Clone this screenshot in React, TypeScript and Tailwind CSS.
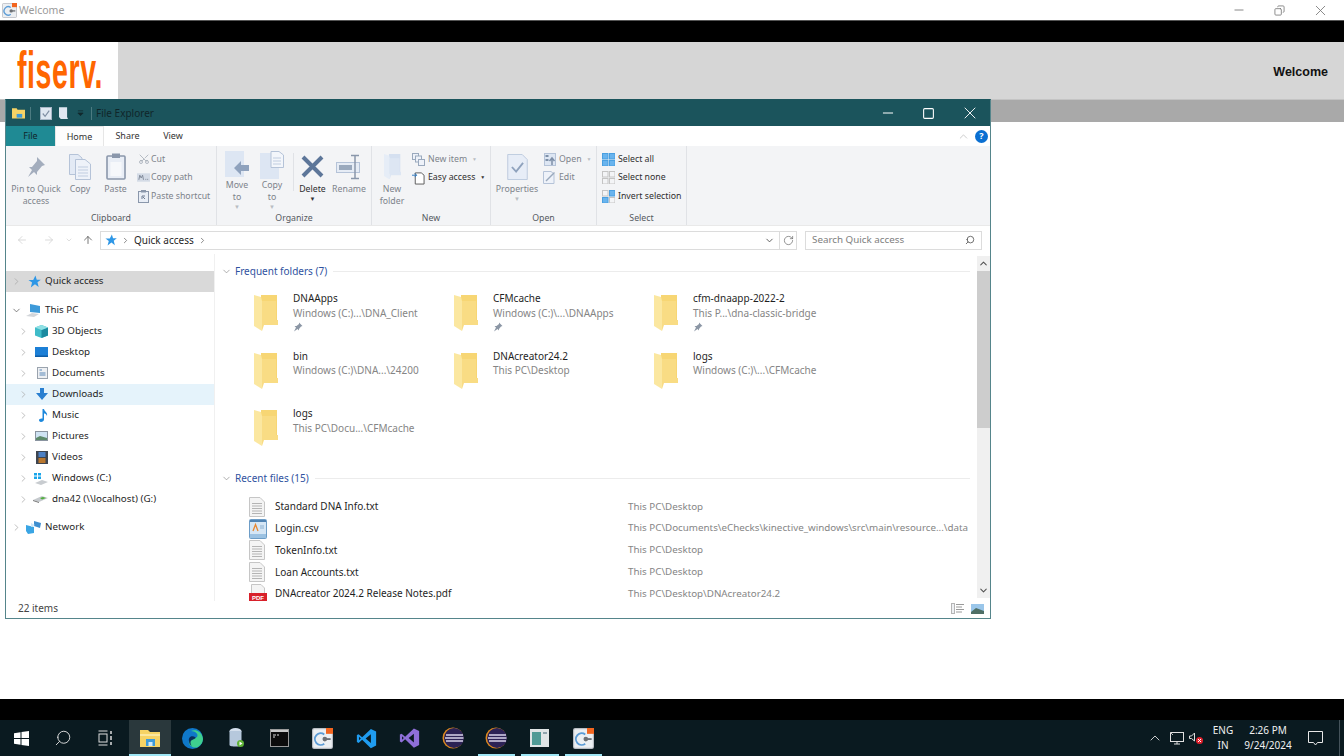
import React from 'react';
import { ChevronDown, ChevronRight, ChevronUp, Scissors, RotateCw, Search, ArrowLeft, ArrowRight, ArrowUp, Minus, Square, X, Copy } from 'lucide-react';

type IconProps = { size?: number };

// ---------- shared drawings ----------
const FolderIcon = ({ size = 24, pale = false }: IconProps & { pale?: boolean }) => (
  <svg width={size} height={size * 1.5} viewBox="0 0 24 36">
    <path d="M1 0 H23 V28 H7 V0 Z" fill={pale ? '#d5e0f0' : '#f7d674'} />
    <path d="M0 0 L7 2 L8 6 V36 L0 31 Z" fill={pale ? '#e6edf7' : '#fbe7a0'} />
    <path d="M8 6 V36 L10 30 H24 V25 H22 V6 Z" fill={pale ? '#dde6f3' : '#f9dc84'} />
  </svg>
);

const AppIcon = ({ size = 18 }: IconProps) => (
  <svg width={size} height={size} viewBox="0 0 18 18">
    <rect x="0.5" y="0.5" width="17" height="17" rx="1.5" fill="#eceff2" stroke="#b8bcc2" />
    <rect x="12" y="0" width="6" height="5" fill="#f2651f" />
    <path d="M10.5 5.5 A5 5 0 1 0 10.5 13.5" fill="none" stroke="#5b9bd5" strokeWidth="1.6" />
    <circle cx="11" cy="9.5" r="2" fill="#6c7075" />
    <path d="M12 9.5 H16" stroke="#6c7075" strokeWidth="1.6" />
  </svg>
);

const StarIcon = ({ size = 14 }: IconProps) => (
  <svg width={size} height={size} viewBox="0 0 14 14">
    <path d="M8 0.5 L9.4 5 H13.8 L10.2 7.8 L11.5 13 L7.5 10 L3 13.5 L4.4 8.2 L0.5 5.3 H5.6 Z" fill="#2e97e6" />
  </svg>
);

const TextFile = () => (
  <svg width="16" height="20" viewBox="0 0 16 20">
    <path d="M0.5 0.5 H11 L15.5 5 V19.5 H0.5 Z" fill="#f4f4f4" stroke="#c6c6c6" />
    <path d="M3 6.5 H13 M3 9 H13 M3 11.5 H13 M3 14 H13 M3 16.5 H13" stroke="#b4b4b4" />
  </svg>
);

const CsvFile = () => (
  <svg width="18" height="20" viewBox="0 0 18 20">
    <rect x="0.5" y="0.5" width="17" height="19" rx="1" fill="#d5e6f5" stroke="#6d9dc7" />
    <rect x="1" y="1" width="16" height="2" fill="#4f83b3" />
    <rect x="1" y="15" width="16" height="4" fill="#9cc2e2" />
    <path d="M4 12 L6.5 5.5 L9 12" fill="none" stroke="#e8862e" strokeWidth="1.3" />
    <path d="M11 7 H15 M11 9 H15" stroke="#8bb0d0" />
  </svg>
);

const PdfFile = () => (
  <svg width="18" height="20" viewBox="0 0 18 20">
    <path d="M2.5 0.5 H12 L15.5 4 V19.5 H2.5 Z" fill="#f4f4f4" stroke="#c6c6c6" />
    <rect x="0" y="9" width="18" height="9" fill="#d8202a" />
    <text x="9" y="15.5" textAnchor="middle" fontSize="6" fontWeight="700" fill="#fff" fontFamily="Liberation Sans, sans-serif">PDF</text>
  </svg>
);

// ---------- ribbon ----------
const BigButton = ({ w, icon, label, dark, caret }: { w: number; icon: React.ReactNode; label: React.ReactNode; dark?: boolean; caret?: string }) => (
  <div className="flex flex-col items-center text-center leading-[12px] whitespace-nowrap" style={{ width: w }}>
    <div className="h-[33px] flex items-center justify-center">{icon}</div>
    <div className={dark ? 'text-[#2f2f2f]' : 'text-[#7d838b]'}>{label}</div>
    {caret && <div className={`text-[6px] leading-[8px] ${caret}`}>▼</div>}
  </div>
);

const SmallRow = ({ icon, label, dark, caret, tight }: { icon: React.ReactNode; label: string; dark?: boolean; caret?: string; tight?: boolean }) => (
  <div className={`h-[18.5px] flex items-center whitespace-nowrap ${tight ? 'gap-px' : 'gap-[3px]'} ${dark ? 'text-[#2f2f2f]' : 'text-[#7d838b]'}`}>
    <div className="w-[13px] h-[13px] flex items-center justify-center shrink-0">{icon}</div>
    <span>{label}</span>
    {caret && <span className={`text-[5px] ml-[2px] ${caret}`}>▼</span>}
  </div>
);

const Group = ({ w, label, children }: { w: number; label: string; children: React.ReactNode }) => (
  <div className="h-full flex flex-col border-r border-[#e0e2e6] shrink-0" style={{ width: w }}>
    <div className="flex-1 min-h-0 pt-[4px] flex">{children}</div>
    <div className="text-center leading-[14px] text-[#55595f]">{label}</div>
  </div>
);

const Grid4 = ({ fills }: { fills: string[] }) => (
  <svg width="13" height="13" viewBox="0 0 13 13">
    {[[0, 0], [7, 0], [0, 7], [7, 7]].map(([x, y], i) => (
      <rect key={i} x={x + 0.5} y={y + 0.5} width="5.5" height="5.5" fill={fills[i] === 'none' ? 'none' : fills[i]} stroke={fills[i] === 'none' ? '#c4c4c4' : '#4a9fe0'} />
    ))}
  </svg>
);

const Ribbon = () => (
  <div className="h-[80px] shrink-0 bg-[#f3f4f6] flex text-[8.75px] border-b border-[#e9e9e9]">
    <Group w={211} label="Clipboard">
      <div className="w-[5px]" />
      <BigButton w={50} label={<>Pin to Quick<br />access</>} icon={
        <svg width="22" height="24" viewBox="0 0 22 24"><path d="M12 2 L20 10 L17 11 L12 17 L12 20 L9 17 L3 22 L7 15 L4 12 L7 12 L12 6 Z" fill="#a3adbd" /></svg>
      } />
      <BigButton w={38} label="Copy" icon={
        <svg width="22" height="26" viewBox="0 0 22 26"><path d="M0.5 0.5 H9 L13 4 V20.5 H0.5 Z" fill="#e3eaf5" stroke="#b5c3d8" /><path d="M6.5 5.5 H16 L21.5 10 V25.5 H6.5 Z" fill="#eef2f9" stroke="#b5c3d8" /><path d="M9 13 H19 M9 16 H19 M9 19 H19 M9 22 H19" stroke="#c0cde0" /></svg>
      } />
      <BigButton w={33} label="Paste" icon={
        <svg width="20" height="27" viewBox="0 0 20 27"><rect x="1" y="3" width="18" height="23" rx="1" fill="#e9eef6" stroke="#8a97ab" strokeWidth="1.6" /><rect x="6" y="0.5" width="8" height="4.5" fill="#8a97ab" /><path d="M4.5 9 H15.5 V23 H4.5 Z" fill="#f6f8fb" /></svg>
      } />
      <div className="ml-[5px]">
        <SmallRow tight label="Cut" icon={<Scissors size={12} color="#9aa2ae" strokeWidth={1.4} className="-rotate-90" />} />
        <SmallRow tight label="Copy path" icon={
          <svg width="14" height="9" viewBox="0 0 14 9"><rect width="14" height="9" fill="#d4dbe6" /><path d="M2 7 L3 2 L4.5 5 L6 2 L7 7 M9 6.5 H10 M11 6.5 H12" stroke="#7d8796" fill="none" /></svg>
        } />
        <SmallRow tight label="Paste shortcut" icon={
          <svg width="11" height="13" viewBox="0 0 11 13"><rect x="0.5" y="1.5" width="10" height="11" fill="#e9eef6" stroke="#8a97ab" /><rect x="3" y="0" width="5" height="2.5" fill="#8a97ab" /><path d="M4 9 V6 H7 M5 7 L7 9" stroke="#6f7d92" fill="none" /></svg>
        } />
      </div>
    </Group>
    <Group w={155} label="Organize">
      <div className="w-[2.5px]" />
      <BigButton w={35} label={<>Move<br />to</>} caret="text-[#b8bcc2]" icon={
        <svg width="24" height="28" viewBox="0 0 24 28"><rect width="19" height="26" fill="#dde6f3" /><path d="M9 17 L16 10 V14 H24 V20 H16 V24 Z" fill="#8fa2bd" /></svg>
      } />
      <BigButton w={35} label={<>Copy<br />to</>} caret="text-[#b8bcc2]" icon={
        <svg width="24" height="28" viewBox="0 0 24 28"><rect y="2" width="19" height="26" fill="#dde6f3" /><path d="M11 0.5 H19 L23.5 4 V16.5 H11 Z" fill="#f3f6fb" stroke="#b5c3d8" /><path d="M13 7 H21 M13 10 H21 M13 13 H21" stroke="#c0cde0" /></svg>
      } />
      <div className="w-[3px]" />
      <div className="w-px h-[38px] bg-[#e0e2e6] mt-[3px]" />
      <BigButton w={38} dark label="Delete" caret="text-[#333]" icon={
        <svg width="23" height="23" viewBox="0 0 23 23"><path d="M2 2 L21 21 M21 2 L2 21" stroke="#5d7699" strokeWidth="4" /></svg>
      } />
      <BigButton w={35} label="Rename" icon={
        <svg width="26" height="26" viewBox="0 0 26 26"><rect x="0.5" y="8.5" width="23" height="10" fill="#e6ecf5" stroke="#b5c3d8" /><rect x="3" y="11" width="13" height="5" fill="#9aa9bd" /><path d="M15 1.5 H23 M19 1.5 V24.5 M15 24.5 H23" stroke="#8a97ab" strokeWidth="1.5" fill="none" /></svg>
      } />
    </Group>
    <Group w={119} label="New">
      <BigButton w={40} label={<>New<br />folder</>} icon={<FolderIcon size={17} pale />} />
      <div>
        <SmallRow label="New item" caret="text-[#b8bcc2]" icon={
          <svg width="13" height="13" viewBox="0 0 13 13"><rect x="0.5" y="0.5" width="6" height="6" fill="#eef2f9" stroke="#9aa9bd" /><rect x="3.5" y="3" width="6" height="6" fill="#eef2f9" stroke="#9aa9bd" /><rect x="6.5" y="6.5" width="6" height="6" fill="#eef2f9" stroke="#9aa9bd" /></svg>
        } />
        <SmallRow dark label="Easy access" caret="text-[#333]" icon={
          <svg width="14" height="14" viewBox="0 0 14 14"><path d="M3.5 1.5 H10 L13 4 V13.5 H3.5 Z" fill="#fff" stroke="#555" /><path d="M0 4 H5 M3 2 L5 4 L3 6" stroke="#2b79c2" fill="none" /></svg>
        } />
      </div>
    </Group>
    <Group w={106} label="Open">
      <BigButton w={52} label="Properties" caret="text-[#b8bcc2]" icon={
        <svg width="21" height="26" viewBox="0 0 22 28"><path d="M0.5 0.5 H16 L21.5 6 V27.5 H0.5 Z" fill="#e7edf7" stroke="#bac8dc" /><path d="M5 14 L9.5 19 L17 9.5" stroke="#8fa2bd" strokeWidth="2" fill="none" /></svg>
      } />
      <div>
        <SmallRow label="Open" caret="text-[#b8bcc2]" icon={
          <svg width="12" height="13" viewBox="0 0 12 13"><rect x="0.5" y="0.5" width="11" height="12" fill="#dde6f3" stroke="#b5c3d8" /><rect x="1.5" y="2" width="3" height="2" fill="#7d8fa8" /><rect x="1.5" y="6" width="3" height="2" fill="#7d8fa8" /><path d="M8 12 V6 M5.5 8 L8 5 L10.5 8" stroke="#7d8fa8" strokeWidth="1.5" fill="none" /></svg>
        } />
        <SmallRow label="Edit" icon={
          <svg width="13" height="13" viewBox="0 0 13 13"><path d="M0.5 0.5 H8 L11 3 V12.5 H0.5 Z" fill="#eef2f9" stroke="#b5c3d8" /><path d="M3 10 L11.5 1.5" stroke="#9aa9bd" strokeWidth="1.5" /></svg>
        } />
      </div>
    </Group>
    <Group w={90} label="Select">
      <div className="ml-[5px]">
        <SmallRow dark label="Select all" icon={<Grid4 fills={['#69b4ee', '#69b4ee', '#69b4ee', '#69b4ee']} />} />
        <SmallRow dark label="Select none" icon={<Grid4 fills={['none', 'none', 'none', 'none']} />} />
        <SmallRow dark label="Invert selection" icon={<Grid4 fills={['none', '#69b4ee', '#69b4ee', 'none']} />} />
      </div>
    </Group>
  </div>
);

// ---------- nav pane ----------
const navIcons: Record<string, React.ReactNode> = {
  star: <StarIcon size={13} />,
  pc: <svg width="15" height="13" viewBox="0 0 15 13"><path d="M4 0 L14 2 V9 L4 8 Z" fill="#3d9ad9" /><path d="M0 12 L6 9 L13 10 L8 13 Z" fill="#d3d6da" /></svg>,
  cube: <svg width="13" height="13" viewBox="0 0 13 13"><path d="M6.5 0 L13 2.5 V10.5 L6.5 13 L0 10.5 V2.5 Z" fill="#3fbcc9" /><path d="M6.5 5 L13 2.5 V10.5 L6.5 13 Z" fill="#1b8aa0" /><path d="M6.5 5 L0 2.5 L6.5 0 L13 2.5 Z" fill="#8fe0e4" /></svg>,
  desktop: <svg width="13" height="10" viewBox="0 0 13 10"><rect width="13" height="10" fill="#1c7fd6" /><rect y="8.5" width="13" height="1.5" fill="#0e5da6" /></svg>,
  docs: <svg width="11" height="12" viewBox="0 0 11 12"><rect x="0.5" y="0.5" width="10" height="11" fill="#eef0f3" stroke="#9aa3ae" /><path d="M2.5 3 H5 M2.5 6 H8.5 M2.5 8 H8.5" stroke="#5a88b8" /></svg>,
  down: <svg width="12" height="12" viewBox="0 0 12 12"><path d="M4 0 H8 V5 H12 L6 12 L0 5 H4 Z" fill="#2a7fd0" /></svg>,
  music: <svg width="9" height="13" viewBox="0 0 9 13"><path d="M3.5 0 H5 C5.5 3 9 3.5 8 7 C7.5 5 6 4.5 5 4.5 V10.5 C5 12 3.5 13 2 13 C0.5 13 0 12 0 11.3 C0 10 1.5 9.2 3.5 9.5 Z" fill="#1c88dc" /></svg>,
  pics: <svg width="13" height="10" viewBox="0 0 13 10"><rect x="0.5" y="0.5" width="12" height="9" fill="#cfe3f3" stroke="#8a94a0" /><path d="M1 7 L5 5 L12 7 V9 H1 Z" fill="#5d8a6a" /></svg>,
  video: <svg width="12" height="13" viewBox="0 0 12 13"><rect width="12" height="13" fill="#3e4550" /><rect x="2.5" y="1" width="7" height="5" fill="#4c80c4" /><rect x="2.5" y="7" width="7" height="5" fill="#b9772e" /></svg>,
  win: <svg width="15" height="13" viewBox="0 0 15 13"><path d="M1 1 H4 V3.5 H1 Z M5 1 H8 V3.5 H5 Z M1 4.5 H4 V7 H1 Z M5 4.5 H8 V7 H5 Z" fill="#19a5ea" /><path d="M2 11 L9 8 L15 10 L8 13 Z" fill="#c8ccd0" /></svg>,
  net: <svg width="15" height="8" viewBox="0 0 15 8"><path d="M0 5 L9 1 L15 3 L6 7 Z" fill="#c5c9cd" /><path d="M0 5 L6 7 V8 L0 6 Z" fill="#777" /><path d="M7 3 L10 2 L13 3 L9 4.5 Z" fill="#4fae3c" /></svg>,
  network: <svg width="15" height="13" viewBox="0 0 15 13"><path d="M8 0 L15 2 L14 7 L8 5 Z" fill="#3e8fd0" /><path d="M0 4 L8 6 V12 L2 13 L0 10 Z" fill="#3aa5e4" /><path d="M5 2 L9 4 L5 6 Z" fill="#cfe8f8" /></svg>,
};

const NavRow = ({ icon, label, indent, open, bg }: { icon: string; label: string; indent?: boolean; open?: boolean; bg?: string }) => (
  <div className={`h-[21px] flex items-center text-[#1f1f1f] whitespace-nowrap ${indent ? 'pl-[11px]' : 'pl-[4px]'} ${bg ?? ''}`}>
    <div className="w-[12px] flex justify-center">
      {open ? <ChevronDown size={11} color="#555" strokeWidth={1.6} /> : <ChevronRight size={11} color="#a6a6a6" strokeWidth={1.6} />}
    </div>
    <div className="w-[23px] flex justify-end pr-[4px]">{navIcons[icon]}</div>
    <span>{label}</span>
  </div>
);

const NavPane = () => (
  <div className="w-[208px] shrink-0 pt-[17px] text-[9.8px]">
    <NavRow icon="star" label="Quick access" bg="bg-[#d9d9d9]" />
    <div className="h-[7.5px]" />
    <NavRow icon="pc" label="This PC" open />
    <NavRow indent icon="cube" label="3D Objects" />
    <NavRow indent icon="desktop" label="Desktop" />
    <NavRow indent icon="docs" label="Documents" />
    <NavRow indent icon="down" label="Downloads" bg="bg-[#e5f3fb]" />
    <NavRow indent icon="music" label="Music" />
    <NavRow indent icon="pics" label="Pictures" />
    <NavRow indent icon="video" label="Videos" />
    <NavRow indent icon="win" label="Windows (C:)" />
    <NavRow indent icon="net" label="dna42 (\\localhost) (G:)" />
    <div className="h-[7px]" />
    <NavRow icon="network" label="Network" />
  </div>
);

// ---------- content ----------
const folders = [
  { name: 'DNAApps', path: 'Windows (C:)...\\DNA_Client', pin: true },
  { name: 'CFMcache', path: 'Windows (C:)\\...\\DNAApps', pin: true },
  { name: 'cfm-dnaapp-2022-2', path: 'This P...\\dna-classic-bridge', pin: true },
  { name: 'bin', path: 'Windows (C:)\\DNA...\\24200' },
  { name: 'DNAcreator24.2', path: 'This PC\\Desktop' },
  { name: 'logs', path: 'Windows (C:)\\...\\CFMcache' },
  { name: 'logs', path: 'This PC\\Docu...\\CFMcache' },
];

const files = [
  { name: 'Standard DNA Info.txt', path: 'This PC\\Desktop', icon: <TextFile /> },
  { name: 'Login.csv', path: 'This PC\\Documents\\eChecks\\kinective_windows\\src\\main\\resource...\\data', icon: <CsvFile /> },
  { name: 'TokenInfo.txt', path: 'This PC\\Desktop', icon: <TextFile /> },
  { name: 'Loan Accounts.txt', path: 'This PC\\Desktop', icon: <TextFile /> },
  { name: 'DNAcreator 2024.2 Release Notes.pdf', path: 'This PC\\Desktop\\DNAcreator24.2', icon: <PdfFile /> },
];

const SectionHeader = ({ label }: { label: string }) => (
  <div className="h-[14px] flex items-center pl-[6px] pr-[7px]">
    <ChevronDown size={11} color="#8a8a8a" strokeWidth={1.5} />
    <span className="ml-[3px] text-[#2f52a0] leading-[14px] whitespace-nowrap">{label}</span>
    <div className="flex-1 h-px bg-[#ececec] ml-[6px]" />
  </div>
);

const Content = () => (
  <div className="flex-1 min-w-0 overflow-hidden pt-[10px] text-[10px] border-l border-[#f0f0f0]">
    <SectionHeader label="Frequent folders (7)" />
    <div className="mt-[13px] ml-[34px] grid grid-cols-[200px_200px_200px] auto-rows-[57.5px]">
      {folders.map((f, i) => (
        <div key={i} className="flex pl-[5px]">
          <div className="pt-[4px] w-[24px] shrink-0"><FolderIcon /></div>
          <div className="ml-[15px] leading-[14.5px] whitespace-nowrap">
            <div className="text-[#1f1f1f]">{f.name}</div>
            <div className="text-[#858585]">{f.path}</div>
            {f.pin && (
              <svg width="10" height="10" viewBox="0 0 10 10" className="mt-[2px]"><path d="M6 0.5 L9.5 4 L8 4.5 L6 7 V8.5 L4.5 7 L1 9.5 L3 5.5 L1.5 4 L3.5 4 L6 2 Z" fill="#8b96a5" /></svg>
            )}
          </div>
        </div>
      ))}
    </div>
    <div className="mt-[7.5px]"><SectionHeader label="Recent files (15)" /></div>
    <div className="mt-[11px] pl-[34px]">
      {files.map((f) => (
        <div key={f.name} className="h-[21.75px] flex items-center whitespace-nowrap">
          <div className="w-[26px] flex justify-start shrink-0">{f.icon}</div>
          <div className="w-[353px] shrink-0 text-[#1f1f1f]">{f.name}</div>
          <div className="text-[#858585] text-[9.8px]">{f.path}</div>
        </div>
      ))}
    </div>
  </div>
);

const Scrollbar = () => (
  <div className="w-[13px] shrink-0 pt-[2px] pb-[3px] flex flex-col">
    <div className="flex-1 bg-[#f0f0f0] flex flex-col items-center">
      <div className="h-[15px] flex items-center"><ChevronUp size={11} color="#505050" strokeWidth={2.2} /></div>
      <div className="w-full h-[157px] bg-[#cdcdcd]" />
      <div className="flex-1" />
      <div className="h-[15px] flex items-center"><ChevronDown size={11} color="#505050" strokeWidth={2.2} /></div>
    </div>
  </div>
);

// ---------- file explorer window ----------
const Explorer = () => (
  <div className="absolute left-[5px] top-[99px] w-[986px] h-[520px] bg-white border border-[#55858b] border-t-[#1b545c] flex flex-col">
    <div className="h-[26px] shrink-0 bg-[#1b545c] flex items-center text-[10px] text-[#10262a]">
      <div className="w-[6px]" />
      <svg width="13" height="12" viewBox="0 0 14 12"><path d="M0 1 H5 L6 2.5 H14 V12 H0 Z" fill="#f6d365" /><rect x="5" y="7" width="6" height="4" fill="#3d9ad9" /></svg>
      <div className="w-px h-[13px] bg-[#4c7b81] mx-[5px]" />
      <svg width="12" height="13" viewBox="0 0 13 14" className="ml-[4px]"><rect x="0.5" y="0.5" width="12" height="13" fill="#dfe7f1" stroke="#aab8c9" /><path d="M3 7 L5.5 10 L10 4" stroke="#7f8ea3" strokeWidth="1.3" fill="none" /></svg>
      <svg width="9" height="13" viewBox="0 0 10 14" className="ml-[7px]"><path d="M0 0 H9 V11 L10 13 H2 L0 11 Z" fill="#dfe7f1" /></svg>
      <svg width="7" height="8" viewBox="0 0 8 8" className="ml-[9px]"><path d="M1 1.5 H7 M1 4 H7 L4 7 Z" stroke="#11282c" fill="#11282c" strokeWidth="0.8" /></svg>
      <div className="w-px h-[13px] bg-[#4c7b81] ml-[7px] mr-[4px]" />
      <span>File Explorer</span>
      <div className="flex-1" />
      <div className="w-[41px] flex justify-center"><Minus size={16} color="#fff" strokeWidth={1.5} /></div>
      <div className="w-[41px] flex justify-center"><Square size={13} color="#fff" strokeWidth={2} /></div>
      <div className="w-[41px] flex justify-center"><X size={20} color="#fff" strokeWidth={1.1} /></div>
    </div>
    <div className="h-[20px] shrink-0 flex items-stretch text-[9px] text-[#333] bg-white">
      <div className="w-[49px] bg-[#1f8a94] flex items-center justify-center text-[#10262a]">File</div>
      <div className="w-[49px] flex items-center justify-center border-x border-t border-[#e6e6e6] bg-[#fdfdfd]">Home</div>
      <div className="w-[47px] flex items-center justify-center">Share</div>
      <div className="w-[44px] flex items-center justify-center">View</div>
      <div className="flex-1" />
      <div className="flex items-center pr-[2px] gap-[5px]">
        <ChevronUp size={13} color="#bdbdbd" strokeWidth={1.4} />
        <div className="w-[13px] h-[13px] rounded-full bg-[#0a6fd1] text-white text-[9px] font-bold flex items-center justify-center">?</div>
      </div>
    </div>
    <Ribbon />
    <div className="h-[28px] shrink-0 flex items-center text-[10px]">
      <div className="w-[94px] flex items-center pl-[10px] shrink-0">
        <ArrowLeft size={12} color="#cfcfcf" strokeWidth={1.5} />
        <ArrowRight size={12} color="#cfcfcf" strokeWidth={1.5} className="ml-[15px]" />
        <ChevronDown size={8} color="#cfcfcf" className="ml-[10px]" />
        <ArrowUp size={12} color="#555" strokeWidth={1.6} className="ml-[9px]" />
      </div>
      <div className="w-[697px] h-[19px] border border-[#dcdcdc] flex items-center pl-[4px] text-[#1f1f1f] shrink-0">
        <StarIcon size={12} />
        <ChevronRight size={9} color="#666" className="ml-[4px]" />
        <span className="ml-[4px]">Quick access</span>
        <ChevronRight size={9} color="#666" className="ml-[4px]" />
        <div className="flex-1" />
        <ChevronDown size={11} color="#555" className="mr-[4px]" />
        <div className="w-[17px] h-full border-l border-[#dcdcdc] flex items-center justify-center">
          <RotateCw size={11} color="#666" strokeWidth={1.5} />
        </div>
      </div>
      <div className="ml-[8px] w-[177px] h-[19px] border border-[#dcdcdc] flex items-center justify-between pl-[6px] pr-[6px] text-[#7e7e7e] text-[9.8px]">
        <span>Search Quick access</span>
        <Search size={10} color="#555" strokeWidth={2} className="-scale-x-100" />
      </div>
    </div>
    <div className="flex-1 min-h-0 flex">
      <NavPane />
      <Content />
      <Scrollbar />
    </div>
    <div className="h-[17px] shrink-0 flex items-center justify-between pl-[12px] pr-[6px] pb-[2px] text-[10px] text-[#444]">
      <span>22 items</span>
      <div className="flex items-center gap-[7px]">
        <svg width="13" height="11" viewBox="0 0 13 11"><rect x="0.5" y="0.5" width="3" height="10" fill="#eef0f3" stroke="#b5b5b5" /><path d="M5 1.5 H13 M5 4 H11 M5 6.5 H13 M5 9 H11" stroke="#9a9a9a" /></svg>
        <svg width="13" height="10" viewBox="0 0 13 10"><rect width="13" height="10" fill="#9ac6ea" /><path d="M0 8 L5 4 L13 7 V10 H0 Z" fill="#4f6f66" /></svg>
      </div>
    </div>
  </div>
);

// ---------- taskbar ----------
const Slot = ({ children, run }: { children?: React.ReactNode; run?: boolean }) => (
  <div className="w-[43.4px] h-full flex items-center justify-center relative shrink-0">
    {children}
    {run && <div className="absolute bottom-0 left-[3px] right-[3px] h-[2px] bg-[#9fe6f5]" />}
  </div>
);

const EclipseIcon = () => (
  <svg width="22" height="22" viewBox="0 0 22 22">
    <circle cx="11" cy="11" r="10.5" fill="#e08a1e" />
    <circle cx="12" cy="11" r="10" fill="#2c2255" />
    <path d="M4 8 H21 M3 11 H21.5 M4 14 H21" stroke="#d8d4ea" strokeWidth="1.5" />
  </svg>
);

const Taskbar = () => (
  <div className="h-[36px] bg-[#0a1a20] flex items-stretch text-[#f0f0f0] text-[10px]">
    <div className="w-[42px] flex items-center justify-center">
      <svg width="15" height="15" viewBox="0 0 15 15"><path d="M0 2.2 L6.5 1.2 V7 H0 Z M7.5 1 L15 0 V7 H7.5 Z M0 8 H6.5 V13.8 L0 12.8 Z M7.5 8 H15 V15 L7.5 14 Z" fill="#fff" /></svg>
    </div>
    <div className="w-[42px] flex items-center justify-center">
      <Search size={18} color="#e8e8e8" strokeWidth={1.2} className="-scale-x-100" />
    </div>
    <div className="w-[45px] flex items-center justify-center pr-[3px]">
      <svg width="15" height="16" viewBox="0 0 15 16"><path d="M0.5 1 H9.5 M0.5 15 H9.5" stroke="#ddd" /><rect x="1" y="4" width="8" height="8" fill="none" stroke="#ddd" /><path d="M13 1 V4 M13 6 V10 M13 12 V15" stroke="#ddd" strokeWidth="1.5" /></svg>
    </div>
    <div className="w-[42px] h-full flex items-center justify-center relative bg-[#2a383c] shrink-0">
      <svg width="20" height="18" viewBox="0 0 20 18"><path d="M0 1 H8 L10 3 H20 V18 H0 Z" fill="#f6d365" /><rect x="0" y="5" width="20" height="2" fill="#fbe7a0" /><rect x="6" y="10" width="9" height="7" fill="#3d9ad9" /><rect x="8.5" y="13" width="4" height="4" fill="#cfe8f8" /></svg>
      <div className="absolute bottom-0 inset-x-0 h-[2px] bg-[#9fe6f5]" />
    </div>
    <Slot>
      <svg width="21" height="21" viewBox="0 0 21 21">
        <circle cx="10.5" cy="10.5" r="10.5" fill="#0f78c9" />
        <path d="M21 11 C20 3 13 1 9 3 C13 3 17 6 15 9 C13 11 8 10 7 13 C6 17 11 21 16 19 C19 17 21 14 21 11 Z" fill="#3fcf8e" />
        <path d="M7 13 C6 9 10 7 13 9 C15 10 12 11 10 12 C8 13 8 16 10 18 C8 17 7 15 7 13 Z" fill="#0a2f5c" />
      </svg>
    </Slot>
    <Slot>
      <svg width="15" height="20" viewBox="0 0 15 20"><ellipse cx="6.5" cy="3" rx="6" ry="3" fill="#d4dfec" /><path d="M0.5 3 V17 C0.5 19 12.5 19 12.5 17 V3 Z" fill="#b6c8dc" /><circle cx="11.5" cy="15.5" r="3.5" fill="#5fb336" /><path d="M10.5 13.5 L13.5 15.5 L10.5 17.5 Z" fill="#fff" /></svg>
    </Slot>
    <Slot>
      <svg width="19" height="18" viewBox="0 0 19 18"><rect x="0.5" y="0.5" width="18" height="17" fill="#0c0c0c" stroke="#9a9a9a" /><rect x="1" y="1" width="17" height="2" fill="#c9c9c9" /><path d="M3 6 H6 M7 6 H9 M3 8 H5" stroke="#ddd" /></svg>
    </Slot>
    <Slot><AppIcon size={21} /></Slot>
    <Slot>
      <svg width="21" height="21" viewBox="0 0 24 24"><path d="M17 1 L23 4 V20 L17 23 L7 13.5 L3 17 L1 16 V8 L3 7 L7 10.5 Z M17 7 L11 12 L17 17 Z M3.5 10 V14 L5.5 12 Z" fill="#1f9cf0" fillRule="evenodd" /></svg>
    </Slot>
    <Slot>
      <svg width="21" height="24" viewBox="0 0 24 24"><path d="M17 1 L23 4 V20 L17 23 L7 13.5 L3 17 L1 16 V8 L3 7 L7 10.5 Z M17 7 L11 12 L17 17 Z M3.5 10 V14 L5.5 12 Z" fill="#8f6fd8" fillRule="evenodd" /></svg>
    </Slot>
    <Slot><EclipseIcon /></Slot>
    <Slot run><EclipseIcon /></Slot>
    <Slot run>
      <svg width="19" height="18" viewBox="0 0 19 18"><rect width="19" height="18" fill="#dfe4e6" /><rect x="2" y="3" width="9" height="13" fill="#4f9a96" /><rect x="13" y="3" width="4" height="2" fill="#8fa3ad" /></svg>
    </Slot>
    <Slot run><AppIcon size={21} /></Slot>
    <div className="flex-1" />
    <div className="w-[22px] flex items-center justify-center"><ChevronUp size={16} color="#e8e8e8" strokeWidth={1.3} /></div>
    <div className="w-[20px] flex items-center justify-center">
      <svg width="15" height="14" viewBox="0 0 15 14"><rect x="1.5" y="1.5" width="13" height="9" fill="none" stroke="#e0e0e0" /><path d="M5 13 H11 M8 11 V13" stroke="#e0e0e0" /><path d="M1 1 L4 4" stroke="#bbb" /></svg>
    </div>
    <div className="w-[20px] flex items-center justify-center">
      <svg width="14" height="12" viewBox="0 0 14 12"><path d="M0.5 4 H2.5 L5.5 1 V9 L2.5 6.5 H0.5 Z" fill="none" stroke="#ddd" /><circle cx="10.5" cy="8.5" r="3.5" fill="#e0202c" /><path d="M9 7 L12 10 M12 7 L9 10" stroke="#fff" /></svg>
    </div>
    <div className="w-[34px] flex flex-col items-center justify-center leading-[15.5px]"><span>ENG</span><span>IN</span></div>
    <div className="w-[56px] flex flex-col items-center justify-center leading-[15.5px]"><span>2:26 PM</span><span>9/24/2024</span></div>
    <div className="w-[30px] flex items-center justify-center ml-[4px]">
      <svg width="15" height="15" viewBox="0 0 15 15"><path d="M0.5 0.5 H14.5 V11.5 H9.5 L7.5 14 L5.5 11.5 H0.5 Z" fill="none" stroke="#e8e8e8" /></svg>
    </div>
    <div className="w-[9px]" />
    <div className="w-[5px] flex justify-start"><div className="w-px bg-[#44525a]" /></div>
  </div>
);

export default function App() {
  return (
    <div className="relative w-[1344px] h-[756px] overflow-hidden bg-white flex flex-col font-['Noto_Sans',sans-serif]">
      <div className="h-[21px] bg-white border-b border-[#555] flex items-center text-[10.5px] text-[#9a9a9a] pl-[2px]">
        <AppIcon size={15} />
        <span className="ml-[2px] pt-px">Welcome</span>
        <div className="flex-1" />
        <div className="w-[41px] flex justify-center"><Minus size={14} color="#777" strokeWidth={1.5} /></div>
        <div className="w-[41px] flex justify-center"><Copy size={11} color="#777" strokeWidth={1.8} className="-scale-x-100" /></div>
        <div className="w-[41px] flex justify-center mr-[3px]"><X size={17} color="#777" strokeWidth={1.2} /></div>
      </div>
      <div className="h-[21px] bg-black" />
      <div className="h-[57px] bg-[#d6d6d6] flex justify-between">
        <div className="w-[118px] h-full bg-white overflow-hidden pl-[17px]">
          <div className="inline-block origin-left scale-x-[0.55] text-[52px] leading-[56px] font-bold text-[#ff6600] font-['Liberation_Sans',sans-serif] tracking-[1px]">fiserv.</div>
        </div>
        <div className="pr-[16px] pt-[22px] leading-[16px] text-[12.5px] font-bold text-[#111] font-['Liberation_Sans',sans-serif]">Welcome</div>
      </div>
      <div className="h-[23px] bg-[#a9a9a9] border-t border-[#c4c4c4]" />
      <div className="flex-1 bg-white" />
      <div className="h-[21px] bg-black" />
      <Taskbar />
      <Explorer />
    </div>
  );
}
